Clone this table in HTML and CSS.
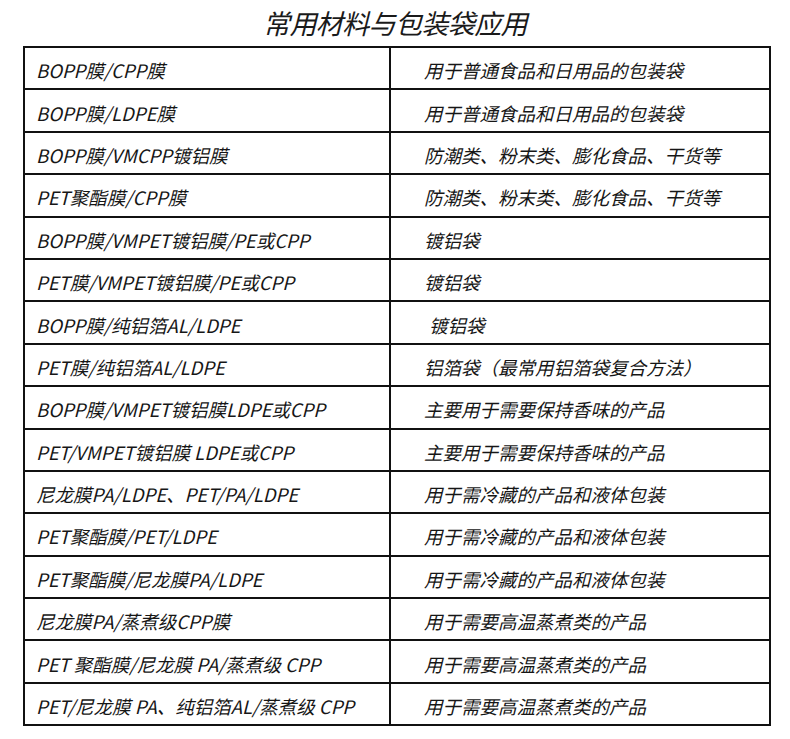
FILE: index.html
```html
<!DOCTYPE html>
<html lang="zh">
<head>
<meta charset="utf-8">
<link rel="stylesheet" href="styles.css">
</head>
<body>
<div class="page">
  <h1 class="title">常用材料与包装袋应用</h1>
  <table class="grid">
    <tr><td class="mat">BOPP膜/CPP膜</td><td class="use">用于普通食品和日用品的包装袋</td></tr>
    <tr><td class="mat">BOPP膜/LDPE膜</td><td class="use">用于普通食品和日用品的包装袋</td></tr>
    <tr><td class="mat">BOPP膜/VMCPP镀铝膜</td><td class="use">防潮类、粉末类、膨化食品、干货等</td></tr>
    <tr><td class="mat">PET聚酯膜/CPP膜</td><td class="use">防潮类、粉末类、膨化食品、干货等</td></tr>
    <tr><td class="mat">BOPP膜/VMPET镀铝膜/PE或CPP</td><td class="use">镀铝袋</td></tr>
    <tr><td class="mat">PET膜/VMPET镀铝膜/PE或CPP</td><td class="use">镀铝袋</td></tr>
    <tr><td class="mat">BOPP膜/纯铝箔AL/LDPE</td><td class="use shift">镀铝袋</td></tr>
    <tr><td class="mat">PET膜/纯铝箔AL/LDPE</td><td class="use">铝箔袋（最常用铝箔袋复合方法）</td></tr>
    <tr><td class="mat">BOPP膜/VMPET镀铝膜LDPE或CPP</td><td class="use">主要用于需要保持香味的产品</td></tr>
    <tr><td class="mat">PET/VMPET镀铝膜 LDPE或CPP</td><td class="use">主要用于需要保持香味的产品</td></tr>
    <tr><td class="mat">尼龙膜PA/LDPE、PET/PA/LDPE</td><td class="use">用于需冷藏的产品和液体包装</td></tr>
    <tr><td class="mat">PET聚酯膜/PET/LDPE</td><td class="use">用于需冷藏的产品和液体包装</td></tr>
    <tr><td class="mat">PET聚酯膜/尼龙膜PA/LDPE</td><td class="use">用于需冷藏的产品和液体包装</td></tr>
    <tr><td class="mat">尼龙膜PA/蒸煮级CPP膜</td><td class="use">用于需要高温蒸煮类的产品</td></tr>
    <tr><td class="mat">PET 聚酯膜/尼龙膜 PA/蒸煮级 CPP</td><td class="use">用于需要高温蒸煮类的产品</td></tr>
    <tr><td class="mat">PET/尼龙膜 PA、纯铝箔AL/蒸煮级 CPP</td><td class="use">用于需要高温蒸煮类的产品</td></tr>
  </table>
</div>
</body>
</html>
```

FILE: styles.css
```css
html, body {
  margin: 0;
  padding: 0;
  background: #ffffff;
}

.page {
  width: 790px;
  height: 739px;
  padding-top: 6px;
  box-sizing: border-box;
  font-family: "Noto Sans CJK SC", "Noto Sans", sans-serif;
  color: #161616;
}

.title {
  margin: 0 0 6px 0;
  text-align: center;
  font-size: 27px;
  font-weight: 400;
  font-style: italic;
  line-height: 34px;
  letter-spacing: -0.6px;
  color: #1a1a1a;
}

.grid {
  margin-left: 23px;
  width: 748px;
  border-collapse: collapse;
  table-layout: fixed;
  border: 2px solid #111111;
}

.grid td {
  border: 2px solid #111111;
  height: 36.4px;
  padding: 4px 0 0 0;
  font-size: 18.5px;
  font-style: italic;
  font-weight: 400;
  line-height: 34px;
  white-space: nowrap;
  letter-spacing: 0;
  vertical-align: middle;
}

.grid td.mat {
  width: 353px;
  padding-left: 11px;
}

.grid td.use {
  padding-left: 33px;
}

.grid td.shift {
  padding-left: 38px;
}
```
